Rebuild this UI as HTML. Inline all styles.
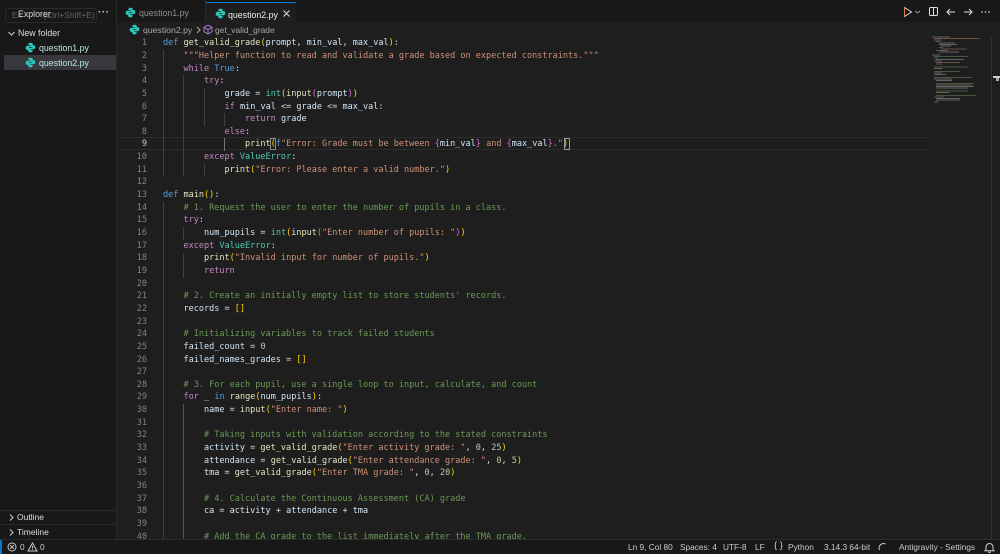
<!DOCTYPE html>
<html><head><meta charset="utf-8"><style>
*{box-sizing:border-box}
html,body{margin:0;padding:0;width:1000px;height:554px;overflow:hidden;background:#1e1e1e}
body{position:relative;font-family:"Liberation Sans",sans-serif;color:#ccc}
.a{position:absolute;white-space:pre}
#side{position:absolute;left:0;top:0;width:117px;height:539px;background:#181818;border-right:1px solid #2b2b2b}
#tabs{position:absolute;left:117px;top:0;width:883px;height:22px;background:#181818}
#tab1{position:absolute;left:0;top:0;width:89px;height:22px;background:#181818;border-right:1px solid #2b2b2b}
#tab2{position:absolute;left:89px;top:2px;width:90px;height:20px;background:#1e1e1e;border-top:1px solid #0078d4}
.ui{font-size:8.8px;line-height:12px}
#code{position:absolute;left:118px;top:37.300px;width:810px;height:502px;overflow:hidden}
.l{position:absolute;left:0;height:12.65px;line-height:12.65px;font-family:"DejaVu Sans Mono",monospace;font-size:8.52px;white-space:pre}
.n{position:absolute;left:0;width:29px;text-align:right;color:#7d8590}
.t{position:absolute;left:45px;color:#dcdcdc}
.k{color:#c586c0}.b{color:#569cd6}.s{color:#ce9178}.c{color:#6a9955}.f{color:#e4e4c0}.v{color:#d2e6f5}.y{color:#4ec9b0}.g{color:#ffd700}.p{color:#da70d6}.u{color:#179fff}.m{color:#b5cea8}
#st{position:absolute;left:0;top:539px;width:1000px;height:15px;background:#181818;border-top:1px solid #2b2b2b;font-size:8.3px;line-height:14px}
.g1{position:absolute;width:1px;background:#404040}
</style></head><body>
<svg width="0" height="0" style="position:absolute"><defs><symbol id="py" viewBox="0 0 16 16"><path fill="#2cc8bc" d="M8 1C5.500 1 5 2 5 3v1.500h3.500V5.500H3.500C2 5.500 1 6.500 1 8.500s1 3 2.200 3H5V9.500C5 8.300 6 7.500 7 7.500h3c.8 0 1.300-.6 1.300-1.300V3C11.300 2 10.500 1 8 1z"/><path fill="#2cc8bc" d="M8 15c2.500 0 3-1 3-2v-1.500H7.500v-1h5c1.500 0 2.500-1 2.500-3s-1-3-2.200-3H11v2c0 1.200-1 2-2 2H6c-.8 0-1.300.6-1.300 1.300V13C4.700 14 5.500 15 8 15z"/></symbol></defs></svg>

<div id="side">
<div class="a" style="left:5px;top:8px;width:92px;height:15px;border:1px solid #2a2a2a;border-radius:3px"></div>
<div class="a ui" style="left:12px;top:9px;color:#666;font-size:8.5px">Ex         (Ctrl+Shift+E)</div>
<div class="a ui" style="left:18px;top:8px;color:#d8d8d8">Explorer</div>
<div class="a ui" style="left:98px;top:7px;color:#ccc;font-weight:bold;font-size:10px;letter-spacing:.5px">···</div>
<svg class="a" style="left:7px;top:29px" width="9" height="9" viewBox="0 0 9 9"><path d="M1.500 3l3 3 3-3" fill="none" stroke="#ccc" stroke-width="1"/></svg>
<div class="a ui" style="left:18px;top:27px;color:#ddd">New folder</div>
<svg class="a" style="left:25px;top:42px" width="11" height="11"><use href="#py"/></svg>
<div class="a ui" style="left:39px;top:42px;color:#b8e8e0">question1.py</div>
<div class="a" style="left:4px;top:55px;width:112px;height:15px;background:#37373d"></div>
<svg class="a" style="left:25px;top:57px" width="11" height="11"><use href="#py"/></svg>
<div class="a ui" style="left:39px;top:57px;color:#b8e8e0">question2.py</div>
<div class="a" style="left:0;top:510px;width:116px;height:1px;background:#2b2b2b"></div>
<div class="a" style="left:0;top:524px;width:116px;height:1px;background:#2b2b2b"></div>
<svg class="a" style="left:7px;top:513px" width="9" height="9" viewBox="0 0 9 9"><path d="M3 1.500l3 3-3 3" fill="none" stroke="#ccc"/></svg>
<div class="a ui" style="left:17px;top:511px;color:#ddd;font-size:8.5px">Outline</div>
<svg class="a" style="left:7px;top:528px" width="9" height="9" viewBox="0 0 9 9"><path d="M3 1.500l3 3-3 3" fill="none" stroke="#ccc"/></svg>
<div class="a ui" style="left:17px;top:526px;color:#ddd;font-size:8.5px">Timeline</div>
</div>

<div id="tabs">
<div id="tab1">
<svg class="a" style="left:8px;top:7px" width="11" height="11"><use href="#py"/></svg>
<div class="a ui" style="left:22px;top:7px;color:#8f8f8f">question1.py</div>
</div>
<div id="tab2">
<svg class="a" style="left:9px;top:5px" width="11" height="11"><use href="#py"/></svg>
<div class="a ui" style="left:22px;top:6px;color:#ececec">question2.py</div>
<svg class="a" style="left:76px;top:6px" width="9" height="9" viewBox="0 0 9 9"><path d="M1.500 1.500l6 6m0-6l-6 6" stroke="#ddd" stroke-width="1"/></svg>
</div>
</div>
<svg class="a" style="left:902px;top:6px" width="90" height="12" viewBox="0 0 90 12">
<path d="M2.500 1.500l7 4.500-7 4.500z" fill="none" stroke="#ddd"/><path d="M2.500 1.500v9" stroke="#e07a50"/>
<path d="M13 5l2.500 2L18 5" fill="none" stroke="#8a9aa8"/>
<rect x="27.500" y="1.500" width="8" height="8" rx="1" fill="none" stroke="#ddd"/><path d="M31.500 1.500v8" stroke="#ddd"/>
<path d="M53 6h-8m3-3l-3 3 3 3" fill="none" stroke="#ddd"/>
<path d="M62 6h8m-3-3l3 3-3 3" fill="none" stroke="#ddd"/>
<circle cx="80" cy="6" r=".8" fill="#ddd"/><circle cx="83.500" cy="6" r=".8" fill="#ddd"/><circle cx="87" cy="6" r=".8" fill="#ddd"/>
</svg>

<svg class="a" style="left:129px;top:24px" width="11" height="11"><use href="#py"/></svg>
<div class="a ui" style="left:143px;top:24px;color:#a8a8a8;font-size:8.7px">question2.py</div>
<svg class="a" style="left:194px;top:25px" width="9" height="10" viewBox="0 0 9 10"><path d="M3 2l3 3-3 3" fill="none" stroke="#aaa"/></svg>
<svg class="a" style="left:203px;top:24px" width="10" height="11" viewBox="0 0 10 11"><path d="M5 1l4 2.300v4.400L5 10 1 7.700V3.300zM1 3.300l4 2.300 4-2.300M5 5.600V10" fill="none" stroke="#b180d7" stroke-width=".9"/></svg>
<div class="a ui" style="left:215px;top:24px;color:#a8a8a8;font-size:8.4px">get_valid_grade</div>

<div id="code">
<div class="a" style="left:0;top:100.200px;width:810px;height:13px;border-top:1px solid #2c2c2c;border-bottom:1px solid #2c2c2c"></div>
<div class="g1" style="left:45px;top:13px;height:126px"></div>
<div class="g1" style="left:65px;top:38px;height:101px"></div>
<div class="g1" style="left:86px;top:51px;height:38px"></div>
<div class="g1" style="left:86px;top:127px;height:13px"></div>
<div class="g1" style="left:106px;top:76px;height:13px"></div>
<div class="g1" style="left:106px;top:101px;height:13px;background:#777"></div>
<div class="g1" style="left:45px;top:165px;height:337px"></div>
<div class="g1" style="left:65px;top:190px;height:13px"></div>
<div class="g1" style="left:65px;top:216px;height:25px"></div>
<div class="g1" style="left:65px;top:367px;height:135px;background:#555"></div>
<div class="a" style="left:152px;top:101px;width:6px;height:12px;border:1px solid #888"></div>
<div class="a" style="left:445.500px;top:101px;width:6px;height:12px;border:1px solid #999"></div>

<div class="l" style="top:0"><span class="n">1</span><span class="t"><span class="b">def</span> <span class="f">get_valid_grade</span><span class="g">(</span><span class="v">prompt</span>, <span class="v">min_val</span>, <span class="v">max_val</span><span class="g">)</span>:</span></div>
<div class="l" style="top:12.650px"><span class="n">2</span><span class="t">    <span class="s">"""Helper function to read and validate a grade based on expected constraints."""</span></span></div>
<div class="l" style="top:25.300px"><span class="n">3</span><span class="t">    <span class="k">while</span> <span class="b">True</span>:</span></div>
<div class="l" style="top:37.950px"><span class="n">4</span><span class="t">        <span class="k">try</span>:</span></div>
<div class="l" style="top:50.600px"><span class="n">5</span><span class="t">            <span class="v">grade</span> = <span class="y">int</span><span class="g">(</span><span class="f">input</span><span class="p">(</span><span class="v">prompt</span><span class="p">)</span><span class="g">)</span></span></div>
<div class="l" style="top:63.250px"><span class="n">6</span><span class="t">            <span class="k">if</span> <span class="v">min_val</span> &lt;= <span class="v">grade</span> &lt;= <span class="v">max_val</span>:</span></div>
<div class="l" style="top:75.900px"><span class="n">7</span><span class="t">                <span class="k">return</span> <span class="v">grade</span></span></div>
<div class="l" style="top:88.550px"><span class="n">8</span><span class="t">            <span class="k">else</span>:</span></div>
<div class="l" style="top:101.200px"><span class="n" style="color:#ccc">9</span><span class="t">                <span class="f">print</span><span class="g">(</span><span class="b">f</span><span class="s">"Error: Grade must be between </span><span class="p">{</span><span class="v">min_val</span><span class="p">}</span><span class="s"> and </span><span class="p">{</span><span class="v">max_val</span><span class="p">}</span><span class="s">."</span><span class="g">)</span></span></div>
<div class="l" style="top:113.850px"><span class="n">10</span><span class="t">        <span class="k">except</span> <span class="y">ValueError</span>:</span></div>
<div class="l" style="top:126.500px"><span class="n">11</span><span class="t">            <span class="f">print</span><span class="g">(</span><span class="s">"Error: Please enter a valid number."</span><span class="g">)</span></span></div>
<div class="l" style="top:139.150px"><span class="n">12</span></div>
<div class="l" style="top:151.800px"><span class="n">13</span><span class="t"><span class="b">def</span> <span class="f">main</span><span class="g">()</span>:</span></div>
<div class="l" style="top:164.450px"><span class="n">14</span><span class="t">    <span class="c"># 1. Request the user to enter the number of pupils in a class.</span></span></div>
<div class="l" style="top:177.100px"><span class="n">15</span><span class="t">    <span class="k">try</span>:</span></div>
<div class="l" style="top:189.750px"><span class="n">16</span><span class="t">        <span class="v">num_pupils</span> = <span class="y">int</span><span class="g">(</span><span class="f">input</span><span class="p">(</span><span class="s">"Enter number of pupils: "</span><span class="p">)</span><span class="g">)</span></span></div>
<div class="l" style="top:202.400px"><span class="n">17</span><span class="t">    <span class="k">except</span> <span class="y">ValueError</span>:</span></div>
<div class="l" style="top:215.050px"><span class="n">18</span><span class="t">        <span class="f">print</span><span class="g">(</span><span class="s">"Invalid input for number of pupils."</span><span class="g">)</span></span></div>
<div class="l" style="top:227.700px"><span class="n">19</span><span class="t">        <span class="k">return</span></span></div>
<div class="l" style="top:240.350px"><span class="n">20</span></div>
<div class="l" style="top:253px"><span class="n">21</span><span class="t">    <span class="c"># 2. Create an initially empty list to store students' records.</span></span></div>
<div class="l" style="top:265.650px"><span class="n">22</span><span class="t">    <span class="v">records</span> = <span class="g">[]</span></span></div>
<div class="l" style="top:278.300px"><span class="n">23</span></div>
<div class="l" style="top:290.950px"><span class="n">24</span><span class="t">    <span class="c"># Initializing variables to track failed students</span></span></div>
<div class="l" style="top:303.600px"><span class="n">25</span><span class="t">    <span class="v">failed_count</span> = <span class="m">0</span></span></div>
<div class="l" style="top:316.250px"><span class="n">26</span><span class="t">    <span class="v">failed_names_grades</span> = <span class="g">[]</span></span></div>
<div class="l" style="top:328.900px"><span class="n">27</span></div>
<div class="l" style="top:341.550px"><span class="n">28</span><span class="t">    <span class="c"># 3. For each pupil, use a single loop to input, calculate, and count</span></span></div>
<div class="l" style="top:354.200px"><span class="n">29</span><span class="t">    <span class="k">for</span> <span class="v">_</span> <span class="b">in</span> <span class="f">range</span><span class="g">(</span><span class="v">num_pupils</span><span class="g">)</span>:</span></div>
<div class="l" style="top:366.850px"><span class="n">30</span><span class="t">        <span class="v">name</span> = <span class="f">input</span><span class="g">(</span><span class="s">"Enter name: "</span><span class="g">)</span></span></div>
<div class="l" style="top:379.500px"><span class="n">31</span></div>
<div class="l" style="top:392.150px"><span class="n">32</span><span class="t">        <span class="c"># Taking inputs with validation according to the stated constraints</span></span></div>
<div class="l" style="top:404.800px"><span class="n">33</span><span class="t">        <span class="v">activity</span> = <span class="f">get_valid_grade</span><span class="g">(</span><span class="s">"Enter activity grade: "</span>, <span class="m">0</span>, <span class="m">25</span><span class="g">)</span></span></div>
<div class="l" style="top:417.450px"><span class="n">34</span><span class="t">        <span class="v">attendance</span> = <span class="f">get_valid_grade</span><span class="g">(</span><span class="s">"Enter attendance grade: "</span>, <span class="m">0</span>, <span class="m">5</span><span class="g">)</span></span></div>
<div class="l" style="top:430.100px"><span class="n">35</span><span class="t">        <span class="v">tma</span> = <span class="f">get_valid_grade</span><span class="g">(</span><span class="s">"Enter TMA grade: "</span>, <span class="m">0</span>, <span class="m">20</span><span class="g">)</span></span></div>
<div class="l" style="top:442.750px"><span class="n">36</span></div>
<div class="l" style="top:455.400px"><span class="n">37</span><span class="t">        <span class="c"># 4. Calculate the Continuous Assessment (CA) grade</span></span></div>
<div class="l" style="top:468.050px"><span class="n">38</span><span class="t">        <span class="v">ca</span> = <span class="v">activity</span> + <span class="v">attendance</span> + <span class="v">tma</span></span></div>
<div class="l" style="top:480.700px"><span class="n">39</span></div>
<div class="l" style="top:493.350px"><span class="n">40</span><span class="t">        <span class="c"># Add the CA grade to the list immediately after the TMA grade.</span></span></div>
</div>

<svg class="a" style="left:930px;top:36px" width="60" height="70" viewBox="0 0 60 70">
<g stroke-width="1" opacity=".55" fill="none">
<path d="M2 1h18" stroke="#8a9a9a"/><path d="M4 2.500h46" stroke="#a87860"/><path d="M4 4h8" stroke="#a070a0"/><path d="M6 5.500h4" stroke="#a070a0"/><path d="M9 7h16" stroke="#999"/><path d="M9 8.500h18" stroke="#999"/><path d="M11 10h10" stroke="#999"/><path d="M9 11.500h4" stroke="#a070a0"/><path d="M11 13h26" stroke="#a87860"/><path d="M6 14.500h12" stroke="#8090a0"/><path d="M9 16h20" stroke="#999"/>
<path d="M2 19h8" stroke="#8a9a9a"/><path d="M4 20.500h34" stroke="#5f8a50"/><path d="M4 22h4" stroke="#a070a0"/><path d="M6 23.500h28" stroke="#999"/><path d="M4 25h8" stroke="#8090a0"/><path d="M6 26.500h24" stroke="#a87860"/><path d="M6 28h6" stroke="#a070a0"/>
<path d="M4 31h34" stroke="#5f8a50"/><path d="M4 32.500h8" stroke="#999"/><path d="M4 35.500h26" stroke="#5f8a50"/><path d="M4 37h8" stroke="#999"/><path d="M4 38.500h12" stroke="#999"/>
<path d="M4 41.500h38" stroke="#5f8a50"/><path d="M4 43h18" stroke="#999"/><path d="M6 44.500h16" stroke="#999"/><path d="M6 47.500h38" stroke="#5f8a50"/><path d="M6 49h36" stroke="#999"/><path d="M6 50.500h38" stroke="#999"/><path d="M6 52h32" stroke="#999"/><path d="M6 55h32" stroke="#5f8a50"/><path d="M6 56.500h14" stroke="#999"/><path d="M6 59.500h40" stroke="#5f8a50"/><path d="M4 61h10" stroke="#a070a0"/><path d="M6 62.500h24" stroke="#999"/><path d="M6 64h24" stroke="#999"/><path d="M4 66h4" stroke="#999"/>
</g></svg>
<div class="a" style="left:991px;top:37px;width:1px;height:502px;background:#333"></div>
<div class="a" style="left:993px;top:76px;width:7px;height:2px;background:#ccc"></div>
<div class="a" style="left:996px;top:78px;width:3px;height:3px;background:#aaa"></div>

<div id="st">
<div class="a" style="left:0;top:0;width:2px;height:15px;background:#0078d4"></div>
<svg class="a" style="left:7px;top:2px" width="10" height="10" viewBox="0 0 10 10"><circle cx="5" cy="5" r="4" fill="none" stroke="#ccc"/><path d="M3.200 3.200l3.600 3.600m0-3.600L3.200 6.800" stroke="#ccc"/></svg>
<div class="a" style="left:20px;top:0;color:#ccc">0</div>
<svg class="a" style="left:27px;top:2px" width="11" height="10" viewBox="0 0 11 10"><path d="M5.500 1L10 9H1z" fill="none" stroke="#ccc"/><path d="M5.500 4v2.500M5.500 7.200v.8" stroke="#ccc"/></svg>
<div class="a" style="left:40px;top:0;color:#ccc">0</div>
<div class="a" style="left:628px;top:0;color:#ccc">Ln 9, Col 80</div>
<div class="a" style="left:680px;top:0;color:#ccc">Spaces: 4</div>
<div class="a" style="left:723px;top:0;color:#ccc">UTF-8</div>
<div class="a" style="left:755px;top:0;color:#ccc">LF</div>
<div class="a" style="left:774px;top:-1px;color:#ccc;font-size:9.5px">{ }</div>
<div class="a" style="left:788px;top:0;color:#ccc">Python</div>
<div class="a" style="left:824px;top:0;color:#ccc">3.14.3 64-bit</div>
<svg class="a" style="left:878px;top:2px" width="10" height="10" viewBox="0 0 10 10"><path d="M1.500 8A4.500 4.500 0 0 1 7.500 2" fill="none" stroke="#ccc"/></svg>
<div class="a" style="left:899px;top:0;color:#ccc">Antigravity - Settings</div>
<svg class="a" style="left:984px;top:2px" width="11" height="11" viewBox="0 0 11 11"><path d="M2 8V5a3.500 3.500 0 0 1 7 0v3l1 .7H1zM4.500 9.500a1 1 0 0 0 2 0" fill="none" stroke="#ccc"/></svg>
</div>
</body></html>
